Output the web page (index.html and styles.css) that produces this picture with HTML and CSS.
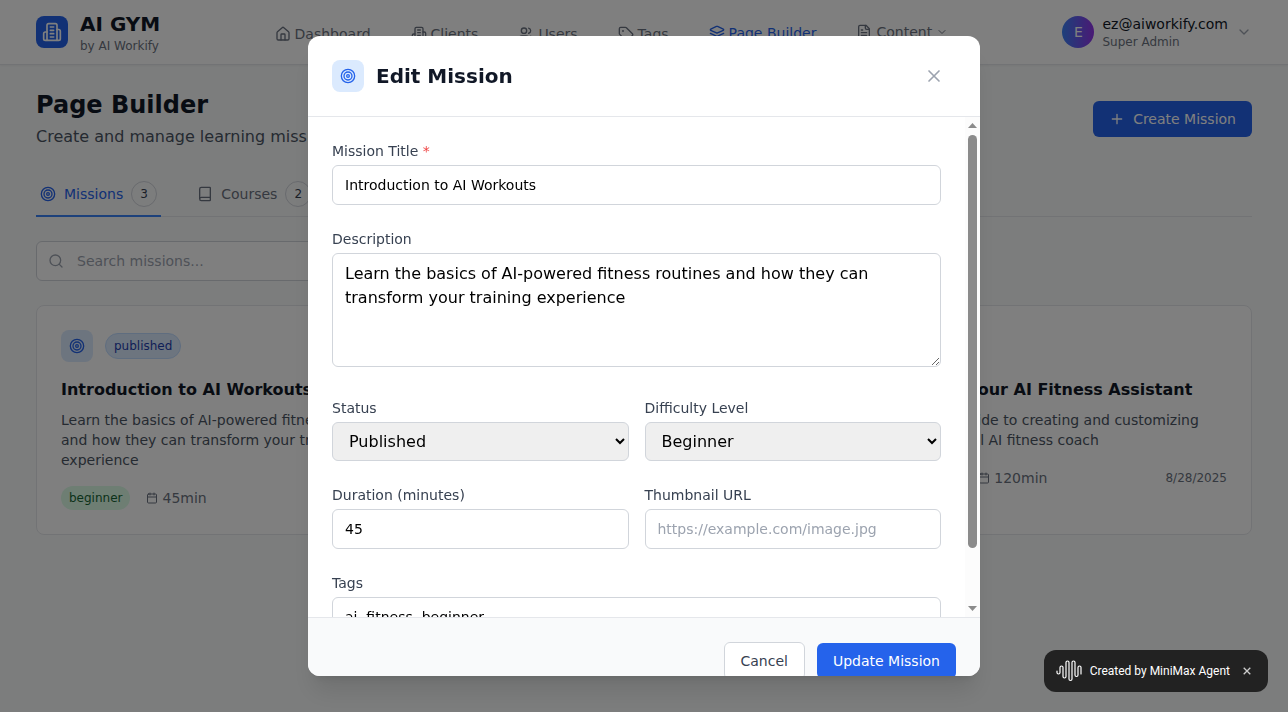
FILE: index.html
```html
<!DOCTYPE html>
<html lang="en">
<head>
<meta charset="utf-8">
<meta name="viewport" content="width=device-width, initial-scale=1">
<title>AI GYM - Page Builder</title>
<link rel="stylesheet" href="styles.css">
</head>
<body>
<svg class="sprite" aria-hidden="true">
  <symbol id="i-target" viewBox="0 0 24 24"><circle cx="12" cy="12" r="10"/><circle cx="12" cy="12" r="6"/><circle cx="12" cy="12" r="2"/></symbol>
  <symbol id="i-building" viewBox="0 0 24 24"><path d="M6 22V4a2 2 0 0 1 2-2h8a2 2 0 0 1 2 2v18Z"/><path d="M6 12H4a2 2 0 0 0-2 2v6a2 2 0 0 0 2 2h2"/><path d="M18 9h2a2 2 0 0 1 2 2v9a2 2 0 0 1-2 2h-2"/><path d="M10 6h4M10 10h4M10 14h4M10 18h4"/></symbol>
  <symbol id="i-home" viewBox="0 0 24 24"><path d="M15 21v-8a1 1 0 0 0-1-1h-4a1 1 0 0 0-1 1v8"/><path d="M3 10a2 2 0 0 1 .709-1.528l7-5.999a2 2 0 0 1 2.582 0l7 5.999A2 2 0 0 1 21 10v9a2 2 0 0 1-2 2H5a2 2 0 0 1-2-2z"/></symbol>
  <symbol id="i-users" viewBox="0 0 24 24"><path d="M16 21v-2a4 4 0 0 0-4-4H6a4 4 0 0 0-4 4v2"/><circle cx="9" cy="7" r="4"/><path d="M22 21v-2a4 4 0 0 0-3-3.87"/><path d="M16 3.13a4 4 0 0 1 0 7.75"/></symbol>
  <symbol id="i-tag" viewBox="0 0 24 24"><path d="M12.586 2.586A2 2 0 0 0 11.172 2H4a2 2 0 0 0-2 2v7.172a2 2 0 0 0 .586 1.414l8.704 8.704a2.426 2.426 0 0 0 3.42 0l6.58-6.58a2.426 2.426 0 0 0 0-3.42z"/><circle cx="7.5" cy="7.5" r=".5" fill="currentColor"/></symbol>
  <symbol id="i-layers" viewBox="0 0 24 24"><path d="m12.83 2.18a2 2 0 0 0-1.66 0L2.6 6.08a1 1 0 0 0 0 1.83l8.58 3.91a2 2 0 0 0 1.66 0l8.58-3.9a1 1 0 0 0 0-1.83Z"/><path d="m22 17.65-9.17 4.16a2 2 0 0 1-1.66 0L2 17.65"/><path d="m22 12.65-9.17 4.16a2 2 0 0 1-1.66 0L2 12.65"/></symbol>
  <symbol id="i-file" viewBox="0 0 24 24"><path d="M15 2H6a2 2 0 0 0-2 2v16a2 2 0 0 0 2 2h12a2 2 0 0 0 2-2V7Z"/><path d="M14 2v4a2 2 0 0 0 2 2h4"/><path d="M10 9H8M16 13H8M16 17H8"/></symbol>
  <symbol id="i-chevron" viewBox="0 0 24 24"><path d="m6 9 6 6 6-6"/></symbol>
  <symbol id="i-plus" viewBox="0 0 24 24"><path d="M5 12h14M12 5v14"/></symbol>
  <symbol id="i-book" viewBox="0 0 24 24"><path d="M4 19.5v-15A2.5 2.5 0 0 1 6.500 2H19a1 1 0 0 1 1 1v18a1 1 0 0 1-1 1H6.500a1 1 0 0 1 0-5H20"/></symbol>
  <symbol id="i-search" viewBox="0 0 24 24"><circle cx="11" cy="11" r="8"/><path d="m21 21-4.300-4.300"/></symbol>
  <symbol id="i-calendar" viewBox="0 0 24 24"><path d="M8 2v4M16 2v4"/><rect width="18" height="18" x="3" y="4" rx="2"/><path d="M3 10h18"/></symbol>
  <symbol id="i-x" viewBox="0 0 24 24"><path d="M18 6 6 18M6 6l12 12"/></symbol>
</svg>

<header class="topbar">
  <div class="container topbar-row">
    <div class="brand">
      <span class="brand-mark"><svg class="icon icon-lg"><use href="#i-building"/></svg></span>
      <div>
        <div class="brand-name">AI GYM</div>
        <div class="caption">by AI Workify</div>
      </div>
    </div>
    <nav class="nav">
      <a class="nav-link" href="#"><svg class="icon"><use href="#i-home"/></svg>Dashboard</a>
      <a class="nav-link" href="#"><svg class="icon"><use href="#i-building"/></svg>Clients</a>
      <a class="nav-link" href="#"><svg class="icon"><use href="#i-users"/></svg>Users</a>
      <a class="nav-link" href="#"><svg class="icon"><use href="#i-tag"/></svg>Tags</a>
      <a class="nav-link nav-link-active" href="#"><svg class="icon"><use href="#i-layers"/></svg>Page Builder</a>
      <button class="nav-menu" type="button"><svg class="icon"><use href="#i-file"/></svg>Content<svg class="icon icon-sm"><use href="#i-chevron"/></svg></button>
    </nav>
    <button class="account" type="button">
      <span class="avatar">E</span>
      <span class="account-text">
        <span class="account-mail">ez@aiworkify.com</span>
        <span class="caption">Super Admin</span>
      </span>
      <svg class="icon account-arrow"><use href="#i-chevron"/></svg>
    </button>
  </div>
</header>

<main class="container page">
  <div class="page-head">
    <div>
      <h1 class="page-title">Page Builder</h1>
      <p class="page-sub">Create and manage learning missions</p>
    </div>
    <button class="btn btn-primary" type="button"><svg class="icon"><use href="#i-plus"/></svg>Create Mission</button>
  </div>

  <div class="tabs">
    <button class="tab tab-active" type="button"><svg class="icon"><use href="#i-target"/></svg>Missions<span class="count">3</span></button>
    <button class="tab" type="button"><svg class="icon"><use href="#i-book"/></svg>Courses<span class="count">2</span></button>
  </div>

  <label class="search">
    <svg class="icon"><use href="#i-search"/></svg>
    <input class="search-input" type="search" placeholder="Search missions..." aria-label="Search missions">
  </label>

  <div class="cards">
    <article class="card">
      <div class="card-top">
        <span class="tile"><svg class="icon"><use href="#i-target"/></svg></span>
        <span class="pill pill-status">published</span>
      </div>
      <h2 class="card-title">Introduction to AI Workouts</h2>
      <p class="card-text">Learn the basics of AI-powered fitness routines and how they can transform your training experience</p>
      <div class="card-meta">
        <span class="pill pill-green">beginner</span>
        <span class="duration"><svg class="icon icon-sm"><use href="#i-calendar"/></svg>45min</span>
      </div>
    </article>
    <article class="card card-last">
      <div class="card-top">
        <span class="tile"><svg class="icon"><use href="#i-target"/></svg></span>
      </div>
      <h2 class="card-title">Building Your AI Fitness Assistant</h2>
      <p class="card-text">Complete guide to creating and customizing your personal AI fitness coach</p>
      <div class="card-meta">
        <span class="pill pill-red">advanced</span>
        <span class="duration"><svg class="icon icon-sm"><use href="#i-calendar"/></svg>120min</span>
        <time class="date" datetime="2025-08-28">8/28/2025</time>
      </div>
    </article>
  </div>
</main>

<div class="overlay">
  <form class="modal" role="dialog" aria-modal="true" aria-labelledby="modal-title">
    <header class="modal-head">
      <span class="tile"><svg class="icon"><use href="#i-target"/></svg></span>
      <h2 class="modal-title" id="modal-title">Edit Mission</h2>
      <button class="modal-close" type="button" aria-label="Close"><svg class="icon icon-lg"><use href="#i-x"/></svg></button>
    </header>
    <div class="modal-main">
      <div class="modal-body">
        <div class="field">
          <label class="label" for="title">Mission Title <span class="required">*</span></label>
          <input class="control" id="title" type="text" value="Introduction to AI Workouts">
        </div>
        <div class="field field-area">
          <label class="label" for="desc">Description</label>
          <textarea class="control control-area" id="desc" rows="4">Learn the basics of AI-powered fitness routines and how they can transform your training experience</textarea>
        </div>
        <div class="field-row">
          <div class="field">
            <label class="label" for="status">Status</label>
            <select class="control control-select" id="status"><option>Published</option><option>Draft</option></select>
          </div>
          <div class="field">
            <label class="label" for="level">Difficulty Level</label>
            <select class="control control-select" id="level"><option>Beginner</option><option>Advanced</option></select>
          </div>
        </div>
        <div class="field-row">
          <div class="field">
            <label class="label" for="duration">Duration (minutes)</label>
            <input class="control" id="duration" type="number" value="45">
          </div>
          <div class="field">
            <label class="label" for="thumb">Thumbnail URL</label>
            <input class="control" id="thumb" type="url" placeholder="https://example.com/image.jpg">
          </div>
        </div>
        <div class="field">
          <label class="label" for="tags">Tags</label>
          <input class="control" id="tags" type="text" value="ai, fitness, beginner">
        </div>
      </div>
      <div class="scrollbar" aria-hidden="true">
        <svg class="scroll-arrow" viewBox="0 0 9 5"><path d="M0 5 4.500 0 9 5z"/></svg>
        <div class="scroll-track"><div class="scroll-thumb"></div></div>
        <svg class="scroll-arrow" viewBox="0 0 9 5"><path d="M0 0h9L4.500 5z"/></svg>
      </div>
    </div>
    <footer class="modal-foot">
      <button class="btn btn-outline" type="button">Cancel</button>
      <button class="btn btn-primary" type="submit">Update Mission</button>
    </footer>
  </form>
</div>

<aside class="toast">
  <svg class="toast-logo" viewBox="0 0 26 22" aria-hidden="true"><path d="M1 11v1.500a1.500 1.500 0 0 0 3 0V7.500a1.500 1.500 0 0 1 3 0V16.500a1.500 1.500 0 0 0 3 0V2.500a1.500 1.500 0 0 1 3 0V19a1.500 1.500 0 0 0 3 0V2.500a1.500 1.500 0 0 1 3 0V15a1.500 1.500 0 0 0 3 0V7.500a1.500 1.500 0 0 1 3 0V14"/></svg>
  <span>Created by MiniMax Agent</span>
  <button class="toast-close" type="button" aria-label="Dismiss"><svg class="toast-x" viewBox="0 0 8 8"><path d="M.7.7l6.600 6.600M7.300.7.7 7.300"/></svg></button>
</aside>
</body>
</html>
```
FILE: styles.css
```css
*, *::before, *::after { box-sizing: border-box; }

body {
  margin: 0;
  min-height: 100vh;
  background: #f9fafb;
  color: #111827;
  font: 14px/20px "DejaVu Sans", sans-serif;
}

h1, h2, p { margin: 0; }
button, input, textarea, select { font: inherit; }
button { margin: 0; border: 0; background: none; color: inherit; cursor: pointer; }
a { color: inherit; text-decoration: none; }

.sprite { display: none; }
.icon {
  flex: none;
  width: 16px;
  height: 16px;
  fill: none;
  stroke: currentColor;
  stroke-width: 2;
  stroke-linecap: round;
  stroke-linejoin: round;
}
.icon-sm { width: 12px; height: 12px; }
.icon-lg { width: 20px; height: 20px; }

.container { max-width: 1280px; margin: 0 auto; padding: 0 32px; }
.caption { color: #6b7280; font-size: 12px; line-height: 16px; }

/* Top bar */
.topbar { background: #fff; border-bottom: 1px solid #e5e7eb; box-shadow: 0 1px 2px rgb(0 0 0 / 5%); }
.topbar-row { display: flex; align-items: center; justify-content: space-between; height: 64px; }
.brand { display: flex; align-items: center; gap: 12px; }
.brand-mark {
  display: grid;
  place-items: center;
  width: 32px;
  height: 32px;
  border-radius: 8px;
  background: #2563eb;
  color: #fff;
}
.brand-name { font-size: 20px; line-height: 28px; font-weight: 700; }
.nav { display: flex; align-items: center; gap: 40px; color: #6b7280; }
.nav-link, .nav-menu { display: flex; align-items: center; gap: 4px; padding: 0; }
.nav-link { padding-top: 4px; }
.nav-link-active { border-bottom: 2px solid #2563eb; color: #2563eb; }
.account { display: flex; align-items: center; gap: 8px; padding: 0; text-align: left; }
.avatar {
  display: grid;
  place-items: center;
  width: 32px;
  height: 32px;
  border-radius: 50%;
  background: linear-gradient(to right, #3b82f6, #9333ea);
  color: #fff;
}
.account-text { display: flex; flex-direction: column; }
.account-arrow { color: #9ca3af; }

/* Page */
.page { display: flex; flex-direction: column; gap: 24px; padding-top: 24px; padding-bottom: 24px; }
.page-head { display: flex; align-items: center; justify-content: space-between; }
.page-title { font-size: 24px; line-height: 32px; }
.page-sub { margin-top: 4px; color: #4b5563; font-size: 16px; line-height: 24px; }

.btn {
  display: flex;
  align-items: center;
  gap: 8px;
  padding: 8px 16px;
  border-radius: 6px;
}
.btn-primary { background: #2563eb; color: #fff; }
.btn-outline { border: 1px solid #d1d5db; background: #fff; color: #374151; }

.tabs { display: flex; gap: 32px; border-bottom: 1px solid #e5e7eb; }
.tab {
  display: flex;
  align-items: center;
  gap: 8px;
  margin-bottom: -1px;
  padding: 8px 4px;
  border-bottom: 2px solid transparent;
  color: #6b7280;
}
.tab-active { border-bottom-color: #3b82f6; color: #2563eb; }
.count {
  min-width: 26px;
  padding: 4px 8px;
  border: 1px solid #d1d5db;
  border-radius: 13px;
  color: #374151;
  font-size: 12px;
  line-height: 16px;
}

.search {
  display: flex;
  align-items: center;
  gap: 13px;
  width: 100%;
  max-width: 448px;
  height: 40px;
  padding: 0 11px;
  border: 1px solid #d1d5db;
  border-radius: 6px;
  background: #fff;
  color: #9ca3af;
}
.search-input { flex: 1; min-width: 0; padding: 0; border: 0; outline: 0; background: none; }
.search-input::placeholder, .control::placeholder { color: #9ca3af; }

/* Mission cards */
.cards { display: grid; grid-template-columns: repeat(3, 1fr); gap: 24px; }
.card { padding: 24px; border: 1px solid #e5e7eb; border-radius: 8px; background: #fff; }
.card-last { grid-column: 3; }
.card-top { display: flex; align-items: center; gap: 12px; }
.tile {
  display: grid;
  place-items: center;
  width: 32px;
  height: 32px;
  border-radius: 8px;
  background: #dbeafe;
  color: #2563eb;
}
.pill { padding: 4px 8px; border-radius: 13px; font-size: 12px; line-height: 16px; }
.pill-status { border: 1px solid #bfdbfe; background: #dbeafe; color: #1e40af; }
.pill-green { background: #dcfce7; color: #166534; }
.pill-red { background: #fee2e2; color: #991b1b; }
.card-title { margin-top: 16px; font-size: 16px; line-height: 24px; }
.card-text { margin-top: 8px; color: #4b5563; }
.card-meta { display: flex; align-items: center; gap: 16px; margin-top: 16px; color: #6b7280; }
.duration { display: flex; align-items: center; gap: 4px; }
.date { margin-left: auto; font-size: 12px; line-height: 16px; }

/* Dialog */
.overlay {
  position: fixed;
  inset: 0;
  display: flex;
  align-items: center;
  justify-content: center;
  padding: 16px;
  background: rgb(0 0 0 / 50%);
}
.modal {
  width: 100%;
  max-width: 672px;
  max-height: 90vh;
  overflow: hidden;
  border-radius: 12px;
  background: #fff;
  box-shadow: 0 20px 25px -5px rgb(0 0 0 / 10%), 0 8px 10px -6px rgb(0 0 0 / 10%);
}
.modal-head {
  display: flex;
  align-items: center;
  gap: 12px;
  padding: 24px;
  border-bottom: 1px solid #e5e7eb;
}
.modal-title { font-size: 20px; line-height: 28px; }
.modal-close {
  display: grid;
  place-items: center;
  width: 44px;
  height: 32px;
  margin-left: auto;
  padding: 0;
  color: #9ca3af;
}
.modal-main { display: flex; max-height: calc(90vh - 140px); }
.modal-body {
  display: flex;
  flex: 1;
  flex-direction: column;
  gap: 24px;
  min-width: 0;
  padding: 24px 24px 44px;
  overflow-y: auto;
  scrollbar-width: none;
}
.scrollbar {
  display: flex;
  flex-direction: column;
  align-items: center;
  gap: 7px;
  width: 15px;
  padding: 6px 0;
  background: #fcfcfc;
}
.scroll-arrow { flex: none; width: 9px; height: 5px; fill: #8b8b8b; }
.scroll-track { flex: 1; width: 9px; }
.scroll-thumb { height: 89%; border-radius: 5px; background: #8b8b8b; }
.field-row { display: grid; grid-template-columns: 1fr 1fr; gap: 16px; }
.field { display: flex; flex-direction: column; gap: 4px; min-width: 0; }
.field-area { padding-bottom: 7px; }
.label { color: #374151; }
.required { color: #ef4444; }
.control {
  width: 100%;
  height: 40px;
  padding: 8px 12px;
  border: 1px solid #d1d5db;
  border-radius: 6px;
  background: #fff;
  color: #000;
}
.control-area { height: auto; font-size: 16px; line-height: 24px; resize: vertical; }
.control-select { height: 39px; background: #efefef; font-size: 16px; }
.modal-foot {
  display: flex;
  align-items: center;
  justify-content: flex-end;
  gap: 12px;
  padding: 24px;
  border-top: 1px solid #e5e7eb;
  background: #f9fafb;
}

/* Toast */
.toast {
  position: fixed;
  right: 20px;
  bottom: 20px;
  display: flex;
  align-items: center;
  gap: 8px;
  height: 42px;
  padding: 0 16px 0 12px;
  border-radius: 12px;
  background: #222;
  color: #fff;
  font: 400 12px/16px Roboto, sans-serif;
}
.toast-logo { width: 26px; height: 22px; fill: none; stroke: #fff; stroke-width: 1.2; stroke-linecap: round; }
.toast-close { display: grid; place-items: center; width: 10px; height: 16px; margin-left: 4px; padding: 0; }
.toast-x { width: 8px; height: 8px; fill: none; stroke: #ccc; stroke-width: 1.3; }
```
